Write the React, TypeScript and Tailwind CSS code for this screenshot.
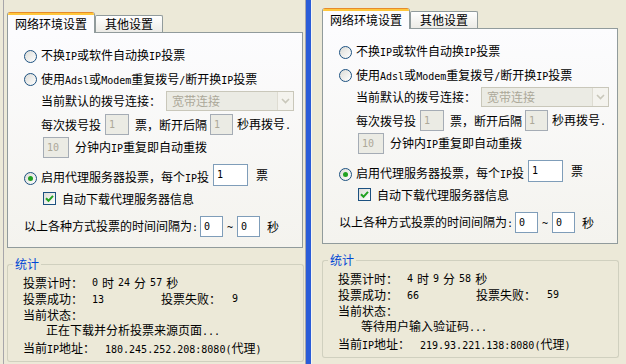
import type { ReactNode } from "react";

type Stats = {
  h: string;
  m: string;
  s: string;
  ok: string;
  fail: string;
  status: string;
  ip: string;
};

const M = ({ children }: { children: ReactNode }) => (
  <span className="font-['DejaVu_Sans_Mono',monospace] text-[10px]">{children}</span>
);

const Radio = ({ on }: { on?: boolean }) => (
  <span className="flex h-[13px] w-[13px] shrink-0 items-center justify-center rounded-full border border-[#1c5180] bg-linear-to-br from-[#dcdcd7] to-white">
    {on && <span className="h-[5px] w-[5px] rounded-full bg-[#21a121]" />}
  </span>
);

const Check = () => (
  <span className="flex h-[13px] w-[13px] shrink-0 items-center justify-center border border-[#1c5180] bg-linear-to-br from-[#dcdcd7] to-white">
    <svg width="9" height="9" viewBox="0 0 9 9">
      <path d="M1 4.2 L3.5 6.8 L8 1.8" fill="none" stroke="#21a121" strokeWidth="2" />
    </svg>
  </span>
);

const Field = ({ value, className, off }: { value: string; className: string; off?: boolean }) => (
  <span
    className={`flex h-[21px] shrink-0 items-center border px-[3px] ${
      off ? "border-[#a5acb5] bg-[#ebebe4] text-[#aca899]" : "border-[#7f9db9] bg-white text-black"
    } ${className}`}
  >
    <M>{value}</M>
  </span>
);

const Dialog = ({ st }: { st: Stats }) => (
  <div className="flex w-[297px] flex-col">
    {/* tabs */}
    <div className="flex h-[20px] items-end">
      <div className="relative z-10 -mb-px flex h-[21px] w-[88px] flex-col overflow-hidden rounded-t-[3px] border-x border-[#919b9c] bg-[#fcfcfe]">
        <div className="h-px bg-[#e68b2c]" />
        <div className="h-[2px] bg-[#ffc73c]" />
        <div className="flex flex-1 items-center justify-center">网络环境设置</div>
      </div>
      <div className="flex h-[17px] w-[68px] items-center justify-center rounded-t-[2px] border border-b-0 border-[#919b9c] bg-linear-to-b from-white to-[#ecebe6]">
        其他设置
      </div>
    </div>

    {/* tab page */}
    <div className="flex h-[216px] w-[296px] flex-col border border-[#919b9c] bg-linear-to-b from-[#fcfcfe] to-[#f4f3ee] pt-[11px]">
      <div className="flex h-[24px] items-center gap-[4px] pl-[16px]">
        <Radio />
        <span>
          不换<M>IP</M>或软件自动换<M>IP</M>投票
        </span>
      </div>
      <div className="flex h-[23px] items-center gap-[4px] pl-[16px]">
        <Radio />
        <span>
          使用<M>Adsl</M>或<M>Modem</M>重复拨号<M>/</M>断开换<M>IP</M>投票
        </span>
      </div>
      <div className="flex h-[20px] items-center pl-[33px]">
        <span>当前默认的拨号连接：</span>
        <span className="ml-[5px] flex h-[20px] w-[128px] items-center border border-[#c9c7ba] bg-[#ebebe4]">
          <span className="flex-1 pl-[5px] text-[#aca899]">宽带连接</span>
          <span className="flex h-full w-[16px] items-center justify-center border-l border-[#dedcd2] bg-[#f4f3ee]">
            <svg width="9" height="6" viewBox="0 0 9 6">
              <path d="M1 1 L4.5 4.5 L8 1" fill="none" stroke="#c9c7ba" strokeWidth="1.6" />
            </svg>
          </span>
        </span>
      </div>
      <div className="mt-[3px] flex h-[21px] items-center pl-[33px]">
        <span>每次拨号投</span>
        <Field value="1" off className="ml-[4px] w-[24px]" />
        <span className="ml-[6px]">票，断开后隔</span>
        <Field value="1" off className="ml-[3px] w-[23px]" />
        <span className="ml-[4px]">
          秒再拨号<M>.</M>
        </span>
      </div>
      <div className="mt-[2px] flex h-[21px] items-center pl-[35px]">
        <Field value="10" off className="w-[26px]" />
        <span className="ml-[6px]">
          分钟内<M>IP</M>重复即自动重拨
        </span>
      </div>
      <div className="mt-[6px] flex h-[22px] items-start pl-[16px]">
        <span className="mt-[8px] flex h-[12px] items-center gap-[4px]">
          <Radio on />
          <span>
            启用代理服务器投票，每个<M>IP</M>投
          </span>
        </span>
        <Field value="1" className="ml-[4px] h-[22px] w-[35px]" />
        <span className="ml-[8px] mt-[5px]">票</span>
      </div>
      <div className="mt-[6px] flex h-[13px] items-center pl-[35px]">
        <Check />
        <span className="ml-[6px]">自动下载代理服务器信息</span>
      </div>
      <div className="mt-[11px] flex h-[21px] items-center pl-[16px]">
        <span>
          以上各种方式投票的时间间隔为<M>:</M>
        </span>
        <Field value="0" className="ml-[2px] w-[23px]" />
        <span className="ml-[4px]">
          <M>~</M>
        </span>
        <Field value="0" className="ml-[4px] w-[23px]" />
        <span className="ml-[7px]">秒</span>
      </div>
    </div>

    {/* stats group box */}
    <div className="mt-[8px] flex w-[297px] flex-col">
      <div className="flex h-[16px] items-center">
        <div className="h-[8px] w-[6px] self-end rounded-tl-[3px] border-l border-t border-[#d0d0bf]" />
        <span className="px-[2px] text-[#0046d5]">统计</span>
        <div className="h-[8px] flex-1 self-end rounded-tr-[3px] border-r border-t border-[#d0d0bf]" />
      </div>
      <div className="flex flex-col rounded-b-[3px] border-x border-b border-[#d0d0bf] pb-[4px] pl-[15px] pt-[3px]">
        <div className="flex h-[16px] items-center">
          <span className="w-[69px]">投票计时：</span>
          <span className="flex items-center gap-[4px]">
            <M>{st.h}</M>
            <span>时</span>
            <M>{st.m}</M>
            <span>分</span>
            <M>{st.s}</M>
            <span>秒</span>
          </span>
        </div>
        <div className="flex h-[16px] items-center">
          <span className="w-[69px]">投票成功：</span>
          <span className="w-[69px]">
            <M>{st.ok}</M>
          </span>
          <span className="w-[71px]">投票失败：</span>
          <M>{st.fail}</M>
        </div>
        <div className="flex h-[16px] items-center">当前状态：</div>
        <div className="flex h-[16px] items-center pl-[23px]">
          <span>
            {st.status}
            <M>...</M>
          </span>
        </div>
        <div className="mt-[2px] flex h-[16px] items-center">
          <span className="w-[82px]">
            当前<M>IP</M>地址：
          </span>
          <span>
            <M>{st.ip}(</M>代理<M>)</M>
          </span>
        </div>
      </div>
    </div>
  </div>
);

export default function App() {
  return (
    <div className="flex h-[364px] w-[626px] overflow-hidden bg-[#ece9d8] font-['Noto_Sans_CJK_SC',sans-serif] text-[12px] leading-[12px] text-black">
      <div className="ml-[3px] flex w-[303px] shrink-0 flex-col border-x border-[#a7a6aa] pl-[3px] pt-[12px]">
        <Dialog
          st={{
            h: "0",
            m: "24",
            s: "57",
            ok: "13",
            fail: "9",
            status: "正在下载并分析投票来源页面",
            ip: "180.245.252.208:8080",
          }}
        />
      </div>
      <div className="w-[5px] shrink-0 bg-[#2a5cd8]" />
      <div className="flex flex-1 flex-col border-l border-[#f6f5ef] pl-[10px] pt-[8px]">
        <Dialog
          st={{
            h: "4",
            m: "9",
            s: "58",
            ok: "66",
            fail: "59",
            status: "等待用户输入验证码",
            ip: "219.93.221.138:8080",
          }}
        />
      </div>
    </div>
  );
}
